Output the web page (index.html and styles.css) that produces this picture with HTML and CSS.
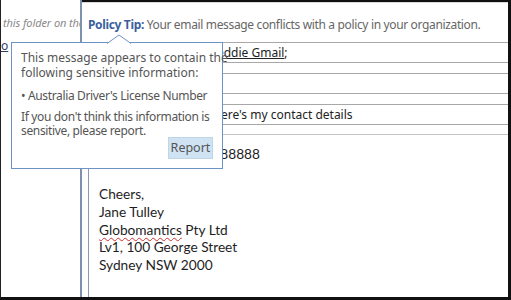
FILE: index.html
```html
<!DOCTYPE html>
<html lang="en">
<head>
  <meta charset="UTF-8" />
  <title>Policy Tip</title>
  <link rel="stylesheet" href="styles.css">
</head>
<body>
<div class="frame">
  <aside class="nav-pane">
    <div class="nav-note">this folder on the server</div>
    <a class="nav-link">o</a>
  </aside>

  <section class="compose">
    <div class="tip-bar">
      <span class="tip-label">Policy Tip:</span> Your email message conflicts with a policy in your organization.
    </div>

    <div class="compose-body">
      <div class="compose-head">
        <div class="buttons">
          <div class="btn-send"></div>
          <div class="btn-to"></div>
        </div>
        <div class="fields">
          <div class="field field-to"><span class="recipient">Freddie Gmail</span>;</div>
          <div class="field"></div>
          <div class="field">Here's my contact details</div>
        </div>
      </div>

      <div class="message">
        <p class="phone">0412 888888</p>
        <p class="sig">
          Cheers,<br>
          Jane Tulley<br>
          <span class="spell">Globomantics</span> Pty Ltd<br>
          Lv1, 100 George Street<br>
          Sydney NSW 2000
        </p>
      </div>
    </div>
  </section>

  <!-- Callout over the tip bar -->
  <div class="callout">
    <svg class="callout-arrow" width="24" height="10" viewBox="0 0 24 10">
      <polygon points="0,9.5 12,1 24,9.5" fill="#fff" />
      <polyline points="0,9.5 12,1 24,9.5" fill="none" stroke="#6d93c4" stroke-width="1" />
    </svg>
    <p class="gap-lg">This message appears to contain the<br>following sensitive information:</p>
    <p class="tight">&bull; Australia Driver's License Number</p>
    <p class="tight">If you don't think this information is<br>sensitive, please report.</p>
    <div class="callout-foot"><button class="report-btn">Report</button></div>
  </div>
</div>
</body>
</html>
```

FILE: styles.css
```css
* { box-sizing: border-box; }
body { margin:0; background:#fff; font-family:'Noto Sans','Open Sans',sans-serif; }
.frame { position:relative; width:511px; height:300px; display:flex; border-left:1px solid #222; border-bottom:3px solid #111; overflow:hidden; }

.nav-pane { flex:none; width:81px; border-right:2px solid #7f92ad; padding-top:15px; overflow:hidden; white-space:nowrap; }
.nav-note { font-style:italic; font-size:11px; letter-spacing:-0.1px; color:#8a8a8a; padding-left:2px; }
.nav-link { display:inline-block; margin-top:7px; font-size:12px; color:#2d3f66; text-decoration:underline; }

.compose { flex:1; min-width:0; display:flex; flex-direction:column; border-top:2px solid #111; border-right:3px solid #111; position:relative; }
.compose::before { content:''; position:absolute; left:0; right:0; top:0; height:1px; background:#d9d9d9; }
.tip-bar { flex:none; height:40px; padding:14px 0 0 6px; font-size:12px; letter-spacing:-0.35px; color:#666; white-space:nowrap; }
.tip-label { font-weight:bold; color:#3b5f9d; }

.compose-body { flex:1; margin-left:6px; border-left:1px solid #8b9ab0; display:flex; flex-direction:column; }
.compose-head { display:flex; border-bottom:1px solid #c4c4c4; padding-bottom:9px; }
.buttons { flex:none; display:flex; gap:11px; width:112px; }
.btn-send, .btn-to { width:50px; height:42px; border-top:1px solid #9a9a9a; }
.fields { flex:1; display:flex; flex-direction:column; gap:10px; }
.field { height:21px; border-top:1px solid #a8a8a8; border-bottom:1px solid #a8a8a8; font-size:12px; color:#222; padding:1px 0 0 11px; white-space:nowrap; }
.field-to { padding-left:5px; }
.recipient { text-decoration:underline; }

.message { flex:1; padding:10px 0 0 10px; font-family:Lato,sans-serif; font-size:13.7px; color:#1e1e1e; }
.message p { margin:0; }
.phone { width:161px; text-align:right; }
.sig { margin-top:23px !important; line-height:17.8px; }
.spell { text-decoration:underline wavy #d03030; text-decoration-thickness:1px; text-underline-offset:2px; }

.callout { position:absolute; left:10px; top:42px; width:212px; height:127px; background:#fff; border:1px solid #6d93c4; padding:8px 9px 0 9px; font-size:12px; line-height:14.5px; color:#555; white-space:nowrap; }
.callout p { margin:0 0 6px; }
.callout p.gap-lg { margin-bottom:9px; }
.callout p.tight { letter-spacing:-0.35px; }
.callout-arrow { position:absolute; left:95px; top:-9px; }
.callout-foot { display:flex; justify-content:flex-end; margin-top:-8px; }
.report-btn { width:45px; height:22px; padding:0; background:#cfe3f3; border:1px solid #bed6ea; font-family:inherit; font-size:12.5px; color:#555; }
```
